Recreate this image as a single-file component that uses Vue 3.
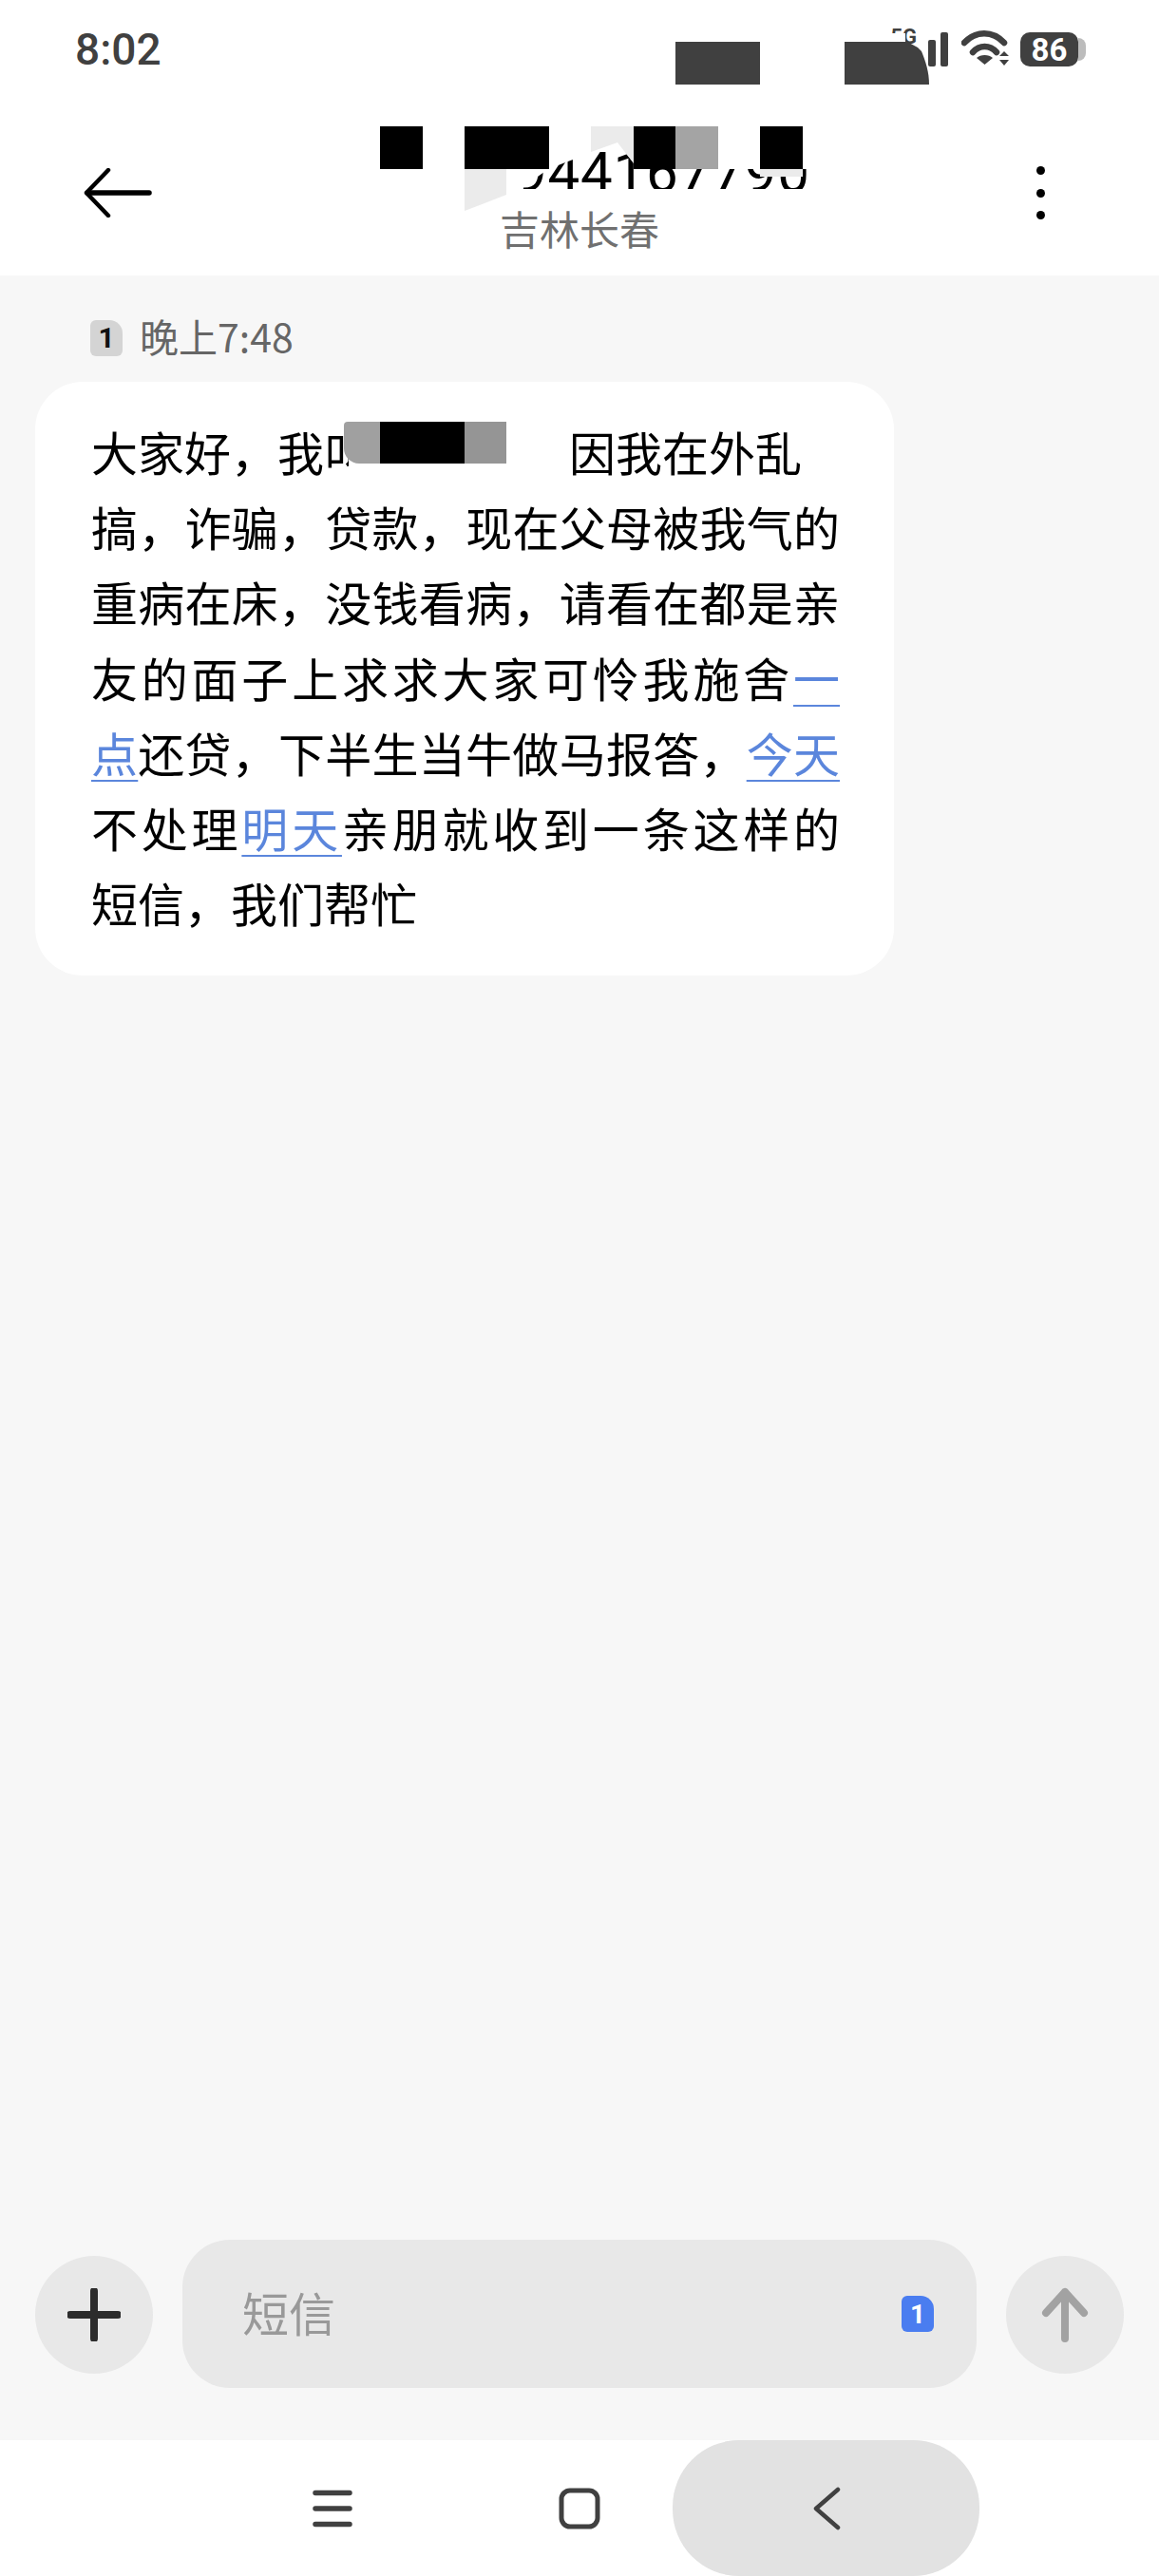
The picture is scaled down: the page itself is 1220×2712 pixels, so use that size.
<template>
  <div class="page">
    <div class="top">
      <div class="status">
        <span class="clock">8:02</span>
        <div class="status-icons">
          <span class="net">5G</span>
          <i class="bar bar-short"></i>
          <i class="bar bar-tall"></i>
          <svg class="wifi" width="52" height="38" viewBox="0 0 52 38">
            <path d="M3 13C15 0 33 0 45 13" fill="none" stroke="#404040" stroke-width="6.5" stroke-linecap="round" />
            <path d="M12 23C19 15 30 15 37 23" fill="none" stroke="#404040" stroke-width="6.5" stroke-linecap="round" />
            <path d="M16 29C20 25 29 25 33 29L24.5 36Z" fill="#404040" />
            <path d="M45 22L50 27H40ZM40 31H50L45 37Z" fill="#404040" />
          </svg>
          <div class="battery">
            <span>86</span>
            <i class="battery-tip"></i>
          </div>
        </div>
      </div>

      <div class="header">
        <svg class="back" width="72" height="52" viewBox="0 0 72 52">
          <path d="M26 2L3 26L26 50" fill="none" stroke="#000" stroke-width="4.5" stroke-linecap="round" stroke-linejoin="round" />
          <path d="M4 26H69" fill="none" stroke="#000" stroke-width="5.5" stroke-linecap="round" />
        </svg>
        <div class="peer">
          <div class="number">944167790</div>
          <div class="region">吉林长春</div>
        </div>
        <div class="more">
          <i></i>
          <i></i>
          <i></i>
        </div>
      </div>

      <!-- 打码的色块，盖在状态栏和号码上面 -->
      <svg class="redact" width="1220" height="290" viewBox="0 0 1220 290">
        <path d="M395 125H870V178H672L650 150L577 178L548 199H870V206H395Z" fill="#fff" />
        <path d="M936 35H953V44H936Z" fill="#fff" />
        <path d="M489 178H533V205L489 222Z" fill="#ebebeb" />
        <path d="M622 133H667V172L650 150L622 160Z" fill="#ebebeb" />
        <path d="M800 178H845V186H800Z" fill="#ebebeb" />
        <rect x="400" y="133" width="45" height="45" fill="#000" />
        <rect x="489" y="133" width="89" height="45" fill="#000" />
        <rect x="667" y="133" width="44" height="45" fill="#000" />
        <rect x="711" y="133" width="45" height="45" fill="#a4a4a4" />
        <rect x="800" y="133" width="45" height="45" fill="#000" />
        <rect x="711" y="44" width="89" height="45" fill="#404040" />
        <path d="M889 44H955L966 50L970 54C974 64 978 75 978 89H889Z" fill="#404040" />
      </svg>
    </div>

    <div class="thread">
      <div class="stamp">
        <span class="sim">1</span>
        <span class="stamp-text">晚上7:48</span>
      </div>
      <div class="bubble">
        <div class="line first">
          大家好，我叫<span class="gap"></span>因我在外乱
          <i class="name-mask"></i>
          <div class="name-bar">
            <i class="gray-l"></i>
            <i class="black"></i>
            <i class="gray-r"></i>
          </div>
        </div>
        <div class="line fill">搞，诈骗，贷款，现在父母被我气的</div>
        <div class="line fill">重病在床，没钱看病，请看在都是亲</div>
        <div class="line fill">友的面子上求求大家可怜我施舍<a>一</a></div>
        <div class="line fill"><a>点</a>还贷，下半生当牛做马报答，<a>今天</a></div>
        <div class="line fill">不处理<a>明天</a>亲朋就收到一条这样的</div>
        <div class="line">短信，我们帮忙</div>
      </div>
    </div>

    <div class="composer">
      <div class="round">
        <svg width="56" height="56" viewBox="0 0 56 56">
          <path d="M28 3V53M3 28H53" fill="none" stroke="#2c2c2c" stroke-width="8" stroke-linecap="round" />
        </svg>
      </div>
      <div class="input">
        <span class="hint">短信</span>
        <span class="sim sim-blue">1</span>
      </div>
      <div class="round">
        <svg width="52" height="58" viewBox="0 0 52 58">
          <path d="M26 54V5M6 27L26 5L46 27" fill="none" stroke="#a2a2a2" stroke-width="8" stroke-linecap="round" stroke-linejoin="round" />
        </svg>
      </div>
    </div>

    <div class="nav">
      <div class="nav-item">
        <svg width="42" height="40" viewBox="0 0 42 40">
          <path d="M3 3.5H39M3 20H39M3 36.5H39" fill="none" stroke="#404040" stroke-width="5.5" stroke-linecap="round" />
        </svg>
      </div>
      <div class="nav-item">
        <svg width="44" height="44" viewBox="0 0 44 44">
          <rect x="3" y="3" width="38" height="38" rx="9" fill="none" stroke="#404040" stroke-width="5" />
        </svg>
      </div>
      <div class="nav-item">
        <div class="pill">
          <svg width="30" height="46" viewBox="0 0 30 46">
            <path d="M27 3L4 23L27 43" fill="none" stroke="#404040" stroke-width="4.5" stroke-linecap="round" stroke-linejoin="round" />
          </svg>
        </div>
      </div>
    </div>
  </div>
</template>

<script setup>
</script>

<style scoped>
.page {
  position: relative;
  width: 1220px;
  height: 2712px;
  display: flex;
  flex-direction: column;
  background: #f7f7f7;
  font-family: "Noto Sans CJK SC", Roboto, sans-serif;
  overflow: hidden;
}

.top {
  position: relative;
  height: 290px;
  background: #fff;
}

.status {
  height: 100px;
  display: flex;
  justify-content: space-between;
  padding: 0 85px 0 79px;
  color: #404040;
  font-family: Roboto, sans-serif;
}

.clock {
  margin-top: 25px;
  font-size: 46px;
  line-height: 54px;
  font-weight: 500;
}

.status-icons {
  position: relative;
  display: flex;
  align-items: flex-end;
  height: 70px;
}

.net {
  position: absolute;
  right: 170px;
  top: 28px;
  font-size: 22px;
  line-height: 22px;
  font-weight: 700;
}

.bar {
  width: 8px;
  background: #404040;
  border-radius: 2px;
}

.bar-short {
  height: 28px;
  margin-right: 5px;
}

.bar-tall {
  height: 36px;
  margin-right: 14px;
}

.wifi {
  margin-right: 10px;
}

.battery {
  position: relative;
  width: 61px;
  height: 36px;
  display: flex;
  align-items: center;
  justify-content: center;
  background: #404040;
  border-radius: 10px;
  color: #fff;
  font-size: 33px;
  font-weight: 700;
}

.battery-tip {
  position: absolute;
  right: -8px;
  top: 6px;
  width: 8px;
  height: 24px;
  background: #bcbcbc;
  border-radius: 0 8px 8px 0;
}

.header {
  height: 190px;
  display: flex;
  align-items: flex-start;
  padding: 0 120px 0 88px;
}

.back {
  margin-top: 77px;
}

.peer {
  flex: 1;
  display: flex;
  flex-direction: column;
  padding-right: 31px;
}

.number {
  margin: 52px 0 0 382px;
  font-family: Roboto, sans-serif;
  font-size: 60px;
  line-height: 60px;
  letter-spacing: 0.8px;
  color: #000;
}

.region {
  text-align: center;
  font-size: 42px;
  line-height: 56px;
  color: #707070;
}

.more {
  display: flex;
  flex-direction: column;
  gap: 14.5px;
  margin-top: 75px;
}

.more i {
  width: 9px;
  height: 9px;
  border-radius: 50%;
  background: #000;
}

.redact {
  position: absolute;
  left: 0;
  top: 0;
}

.thread {
  flex: 1;
  padding: 46px 0 0 37px;
}

.stamp {
  display: flex;
  align-items: center;
  height: 39px;
  margin-left: 58px;
  gap: 18px;
  font-size: 41px;
  line-height: 34px;
  color: #666;
}

.stamp-text {
  margin-top: -6px;
}

.sim {
  width: 34px;
  height: 38px;
  display: flex;
  align-items: center;
  justify-content: center;
  background: #d4d4d4;
  border-radius: 6px 14px 6px 6px;
  color: #111;
  font-family: Roboto, sans-serif;
  font-size: 30px;
  font-weight: 700;
}

.bubble {
  width: 904px;
  box-sizing: border-box;
  margin-top: 27px;
  padding: 33px 57px 38px 59px;
  background: #fff;
  border-radius: 50px;
  font-size: 49px;
  line-height: 79.2px;
  color: #000;
}

.line {
  position: relative;
  white-space: nowrap;
}

.fill {
  text-align: justify;
  text-align-last: justify;
  white-space: normal;
}

.gap {
  display: inline-block;
  width: 209px;
}

.name-mask {
  position: absolute;
  left: 271px;
  top: 0;
  width: 233px;
  height: 100%;
  background: #fff;
}

.name-bar {
  position: absolute;
  left: 266px;
  top: 9px;
  display: flex;
  height: 44px;
}

.name-bar i {
  display: block;
  height: 100%;
}

.gray-l {
  width: 38px;
  background: #a0a0a0;
  border-radius: 4px 0 0 16px;
}

.black {
  width: 89px;
  background: #000;
}

.gray-r {
  width: 44px;
  background: #959595;
}

a {
  color: #5b86dc;
  text-decoration: underline;
  text-decoration-thickness: 2px;
  text-underline-offset: 8px;
}

.composer {
  height: 211px;
  box-sizing: border-box;
  display: flex;
  align-items: flex-start;
  gap: 31px;
  padding: 0 37px;
}

.round {
  width: 124px;
  height: 124px;
  margin-top: 17px;
  display: flex;
  align-items: center;
  justify-content: center;
  border-radius: 50%;
  background: #e8e8e8;
}

.input {
  flex: 1;
  height: 156px;
  display: flex;
  align-items: center;
  justify-content: space-between;
  padding: 0 45px 0 63px;
  border-radius: 50px;
  background: #e8e8e8;
  font-size: 49px;
  color: #999;
}

.hint {
  margin-top: -6px;
}

.sim-blue {
  background: #4a7df0;
  color: #fff;
  font-size: 28px;
}

.nav {
  height: 143px;
  display: flex;
  padding-left: 220px;
  background: #fff;
}

.nav-item {
  position: relative;
  width: 260px;
  display: flex;
  align-items: center;
  justify-content: center;
}

.pill {
  position: absolute;
  left: -32px;
  top: 0;
  width: 323px;
  height: 143px;
  display: flex;
  align-items: center;
  justify-content: center;
  border-radius: 70px;
  background: #e2e2e2;
}
</style>
